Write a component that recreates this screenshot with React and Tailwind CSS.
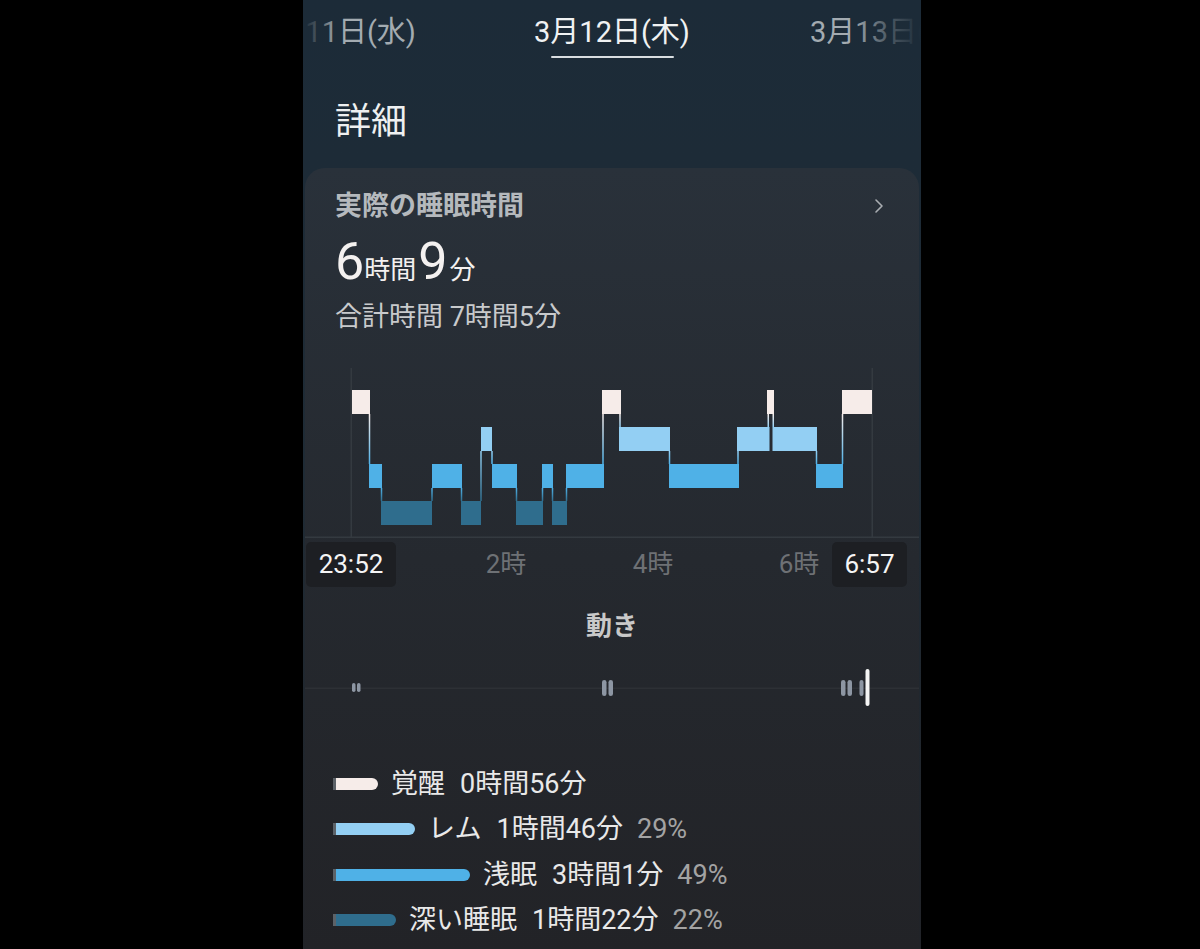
import React from "react";
import { ChevronRight } from "lucide-react";

const COLORS = ["#f6ece9", "#93cff3", "#4fb1e7", "#2f6d8d"];
const TOPS = [390, 427, 464, 501];

const SEGS = [
  [352, 370, 0],
  [369, 382, 2],
  [381, 432, 3],
  [432, 462, 2],
  [461, 481, 3],
  [481, 492, 1],
  [492, 517, 2],
  [516, 543, 3],
  [542, 553, 2],
  [552, 567, 3],
  [566, 604, 2],
  [602, 621, 0],
  [619, 670, 1],
  [669, 739, 2],
  [737, 769.5, 1],
  [767, 774, 0],
  [772.5, 817, 1],
  [816, 843, 2],
  [842, 872, 0],
];

const OX = 305;
const OY = 360;

function SleepChart() {
  const pairs = [];
  for (let a = 0; a < 4; a++) for (let b = a + 1; b < 4; b++) pairs.push([a, b]);
  const connectors = [];
  for (let i = 0; i < SEGS.length - 1; i++) {
    const a = SEGS[i];
    const b = SEGS[i + 1];
    const up = Math.min(a[2], b[2]);
    const lo = Math.max(a[2], b[2]);
    const x = (a[1] + b[0]) / 2 - 0.75 - OX;
    const y0 = TOPS[up] + 24 - OY;
    const y1 = TOPS[lo] - OY;
    connectors.push(
      <rect key={"c" + i} x={x} y={y0} width={1.5} height={y1 - y0} fill={`url(#g${up}${lo})`} />
    );
  }
  return (
    <svg width="614" height="178" viewBox="0 0 614 178" className="block">
      <defs>
        {pairs.map(([a, b]) => (
          <linearGradient key={`g${a}${b}`} id={`g${a}${b}`} x1="0" y1="0" x2="0" y2="1">
            <stop offset="0" stopColor={COLORS[a]} />
            <stop offset="1" stopColor={COLORS[b]} />
          </linearGradient>
        ))}
      </defs>
      <rect x={45.5} y={8} width={1.5} height={169} fill="#343a40" />
      <rect x={566.5} y={8} width={1.5} height={169} fill="#343a40" />
      <rect x={0} y={176.5} width={614} height={1.5} fill="#343a40" />
      {SEGS.map(([x0, x1, l], i) => (
        <rect key={i} x={x0 - OX} y={TOPS[l] - OY} width={x1 - x0} height={24} fill={COLORS[l]} />
      ))}
      {connectors}
    </svg>
  );
}

const TICKS = [
  [352, 355.5, 684, 693, "#8d96a3"],
  [357, 360.5, 684, 693, "#8d96a3"],
  [602, 606.5, 681, 697, "#8d96a3"],
  [608.5, 613, 681, 697, "#8d96a3"],
  [841, 845.5, 681, 697, "#8d96a3"],
  [847.5, 852, 681, 697, "#8d96a3"],
  [859.5, 863.5, 681, 697, "#8d96a3"],
  [865.5, 869.5, 670, 707, "#f4f4f4"],
];

function Movement() {
  const oy = 665;
  return (
    <svg width="614" height="50" viewBox="0 0 614 50" className="block">
      <rect x={0} y={23.5} width={614} height={1.5} fill="#2d3035" />
      {TICKS.map(([x0, x1, y0, y1, c], i) => (
        <rect
          key={i}
          x={x0 - OX}
          y={y0 - oy}
          width={x1 - x0}
          height={y1 - y0}
          rx={(x1 - x0) / 2}
          fill={c}
        />
      ))}
    </svg>
  );
}

const LEGEND = [
  { label: "覚醒", value: "0時間56分", pct: null, color: "bg-[#f6ece9]", w: "w-[42px]" },
  { label: "レム", value: "1時間46分", pct: "29%", color: "bg-[#93cff3]", w: "w-[79px]" },
  { label: "浅眠", value: "3時間1分", pct: "49%", color: "bg-[#4fb1e7]", w: "w-[134px]" },
  { label: "深い睡眠", value: "1時間22分", pct: "22%", color: "bg-[#2f6d8d]", w: "w-[60px]" },
];

export default function App() {
  return (
    <div className="w-full min-h-[949px] bg-black flex justify-start pl-[303px] font-[family-name:Roboto,'Noto_Sans_CJK_JP',sans-serif]">
      <div className="w-[618px] h-[949px] overflow-hidden flex flex-col bg-gradient-to-b from-[#1c2b38] via-[#1f2b35] to-[#212328]">
        {/* date tabs */}
        <div className="relative h-[58px] overflow-hidden shrink-0">
          <div className="flex ml-[-101px] pt-[14px]">
            <div className="w-[272px] shrink-0 text-center text-[29px] leading-[36px] text-[#a3abb1]">3月11日(水)</div>
            <div className="w-[276px] shrink-0 flex flex-col items-center">
              <div className="text-[29px] leading-[36px] text-[#f0f2f3]">3月12日(木)</div>
              <div className="w-[123px] h-[2px] mt-[6px] bg-[#d9dee1] rounded-full"></div>
            </div>
            <div className="w-[276px] shrink-0 text-center text-[29px] leading-[36px] text-[#a3abb1]">3月13日(金)</div>
          </div>
          <div className="absolute left-0 top-0 h-full w-[34px] bg-gradient-to-r from-[#1c2b38] via-[#1c2b38]/60 to-transparent"></div>
          <div className="absolute right-0 top-0 h-full w-[70px] bg-gradient-to-l from-[#1c2b38] via-[#1c2b38]/60 to-transparent"></div>
        </div>

        <div className="pl-[32px] mt-[42px] text-[36px] leading-[44px] text-[#eef0f1] shrink-0">詳細</div>

        {/* card */}
        <div className="mt-[24px] mx-[2px] flex-1 rounded-t-[20px] bg-gradient-to-b from-[#29313a] via-[#25292f] to-[#222327] flex flex-col">
          <div className="pl-[30px] pr-[28px] pt-[22px] flex items-center justify-between">
            <div className="text-[27px] leading-[32px] font-semibold text-[#b5b9bd]">実際の睡眠時間</div>
            <ChevronRight size={24} strokeWidth={1.6} className="text-[#a9adb1]" />
          </div>
          <div className="pl-[30px] mt-[14px] flex items-baseline leading-[52px] text-[#f4f1f0]">
            <span className="text-[52px]">6</span>
            <span className="text-[26px]">時間</span>
            <span className="text-[52px] ml-[2px]">9</span>
            <span className="text-[26px] ml-[2px]">分</span>
          </div>
          <div className="pl-[30px] mt-[5px] text-[27px] leading-[32px] text-[#c8cacc]">合計時間 7時間5分</div>

          <div className="mt-[27px]">
            <SleepChart />
          </div>

          <div className="mt-[4px] flex items-center h-[45px]">
            <div className="ml-[1px] w-[90px] h-[45px] rounded-[5px] bg-[#1d1f23] flex items-center justify-center text-[26px] text-[#f5f5f5]">23:52</div>
            <div className="ml-[80px] w-[60px] text-center text-[26px] text-[#6e7175]">2時</div>
            <div className="ml-[87px] w-[60px] text-center text-[26px] text-[#6e7175]">4時</div>
            <div className="ml-[86px] w-[60px] text-center text-[26px] text-[#6e7175]">6時</div>
            <div className="ml-[3px] w-[75px] h-[45px] rounded-[5px] bg-[#1d1f23] flex items-center justify-center text-[26px] text-[#f5f5f5]">6:57</div>
          </div>

          <div className="mt-[23px] text-center text-[26px] leading-[32px] font-semibold text-[#c9c9c9]">動き</div>

          <div className="mt-[22px]">
            <Movement />
          </div>

          <div className="mt-[47px] flex flex-col">
            {LEGEND.map((r) => (
              <div key={r.label} className="h-[45.5px] flex items-center pl-[28px] text-[27px] leading-[32px]">
                <div className="w-[3px] h-[12px] bg-[#5c6268]"></div>
                <div className={`${r.w} h-[12px] ${r.color} rounded-r-full`}></div>
                <span className="ml-[13px] text-[#e9e9e9]">{r.label}</span>
                <span className="ml-[15px] text-[#e9e9e9]">{r.value}</span>
                {r.pct && <span className="ml-[14px] text-[#a3a3a3]">{r.pct}</span>}
              </div>
            ))}
          </div>
        </div>
      </div>
    </div>
  );
}
